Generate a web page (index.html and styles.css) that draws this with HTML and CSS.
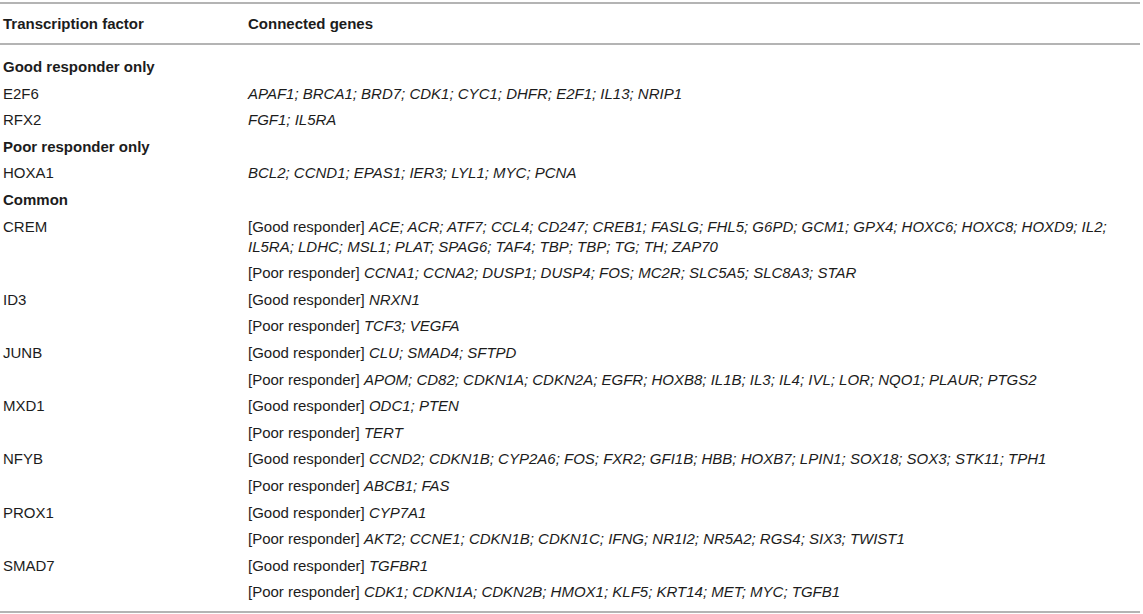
FILE: index.html
```html
<!DOCTYPE html>
<html>
<head>
<meta charset="utf-8">
<link rel="stylesheet" href="styles.css">
</head>
<body>
<table class="tf-table">
  <thead>
    <tr>
      <th class="col-tf">Transcription factor</th>
      <th class="col-genes">Connected genes</th>
    </tr>
  </thead>
  <tbody>
    <tr class="first"><td class="group" colspan="2">Good responder only</td></tr>
    <tr><td>E2F6</td><td><i>APAF1; BRCA1; BRD7; CDK1; CYC1; DHFR; E2F1; IL13; NRIP1</i></td></tr>
    <tr><td>RFX2</td><td><i>FGF1; IL5RA</i></td></tr>
    <tr><td class="group" colspan="2">Poor responder only</td></tr>
    <tr><td>HOXA1</td><td><i>BCL2; CCND1; EPAS1; IER3; LYL1; MYC; PCNA</i></td></tr>
    <tr><td class="group" colspan="2">Common</td></tr>
    <tr><td>CREM</td><td>[Good responder] <i>ACE; ACR; ATF7; CCL4; CD247; CREB1; FASLG; FHL5; G6PD; GCM1; GPX4; HOXC6; HOXC8; HOXD9; IL2; IL5RA; LDHC; MSL1; PLAT; SPAG6; TAF4; TBP; TBP; TG; TH; ZAP70</i></td></tr>
    <tr><td></td><td>[Poor responder] <i>CCNA1; CCNA2; DUSP1; DUSP4; FOS; MC2R; SLC5A5; SLC8A3; STAR</i></td></tr>
    <tr><td>ID3</td><td>[Good responder] <i>NRXN1</i></td></tr>
    <tr><td></td><td>[Poor responder] <i>TCF3; VEGFA</i></td></tr>
    <tr><td>JUNB</td><td>[Good responder] <i>CLU; SMAD4; SFTPD</i></td></tr>
    <tr><td></td><td>[Poor responder] <i>APOM; CD82; CDKN1A; CDKN2A; EGFR; HOXB8; IL1B; IL3; IL4; IVL; LOR; NQO1; PLAUR; PTGS2</i></td></tr>
    <tr><td>MXD1</td><td>[Good responder] <i>ODC1; PTEN</i></td></tr>
    <tr><td></td><td>[Poor responder] <i>TERT</i></td></tr>
    <tr><td>NFYB</td><td>[Good responder] <i>CCND2; CDKN1B; CYP2A6; FOS; FXR2; GFI1B; HBB; HOXB7; LPIN1; SOX18; SOX3; STK11; TPH1</i></td></tr>
    <tr><td></td><td>[Poor responder] <i>ABCB1; FAS</i></td></tr>
    <tr><td>PROX1</td><td>[Good responder] <i>CYP7A1</i></td></tr>
    <tr><td></td><td>[Poor responder] <i>AKT2; CCNE1; CDKN1B; CDKN1C; IFNG; NR1I2; NR5A2; RGS4; SIX3; TWIST1</i></td></tr>
    <tr><td>SMAD7</td><td>[Good responder] <i>TGFBR1</i></td></tr>
    <tr class="last"><td></td><td>[Poor responder] <i>CDK1; CDKN1A; CDKN2B; HMOX1; KLF5; KRT14; MET; MYC; TGFB1</i></td></tr>
  </tbody>
</table>
</body>
</html>
```

FILE: styles.css
```css
html, body {
  margin: 0;
  padding: 0;
  background: #ffffff;
}

body {
  padding-top: 2px;
  font-family: "Liberation Sans", Arial, Helvetica, sans-serif;
  color: #1c1c1c;
  font-size: 15px;
}

.tf-table {
  width: 1140px;
  border-collapse: collapse;
  border-top: 2px solid #b4b4b4;
  border-bottom: 2px solid #b4b4b4;
  table-layout: fixed;
}

.tf-table th {
  text-align: left;
  font-weight: bold;
  line-height: 20px;
  height: 39px;
  padding: 0 0 0 3px;
  border-bottom: 2px solid #b4b4b4;
  vertical-align: middle;
}

.tf-table th.col-tf {
  width: 242px;
}

.tf-table td {
  line-height: 20px;
  padding: 3.3px 0 3.3px 3px;
  vertical-align: top;
}

.tf-table tr.first td {
  padding-top: 12px;
}

.tf-table tr.last td {
  padding-bottom: 9px;
}

.tf-table td.group {
  font-weight: bold;
}

.tf-table i {
  font-style: italic;
}
```
